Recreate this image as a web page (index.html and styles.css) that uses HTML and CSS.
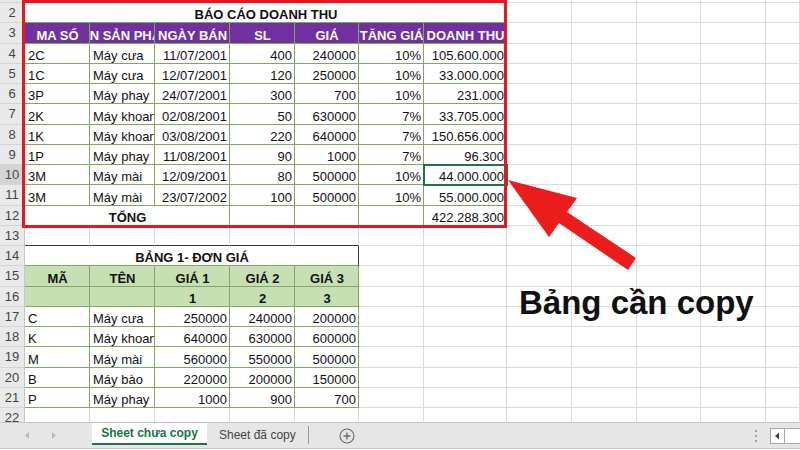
FILE: index.html
```html
<!DOCTYPE html>
<html lang="vi">
<head>
<meta charset="utf-8">
<title>Báo cáo doanh thu</title>
<link rel="stylesheet" href="styles.css">
</head>
<body>
<div class="sheet">
<table class="grid">
<colgroup>
<col class="w25"><col class="w65"><col class="w65"><col class="w75"><col class="w65"><col class="w64"><col class="w65"><col class="w83"><col class="w65"><col class="w65"><col class="w64"><col class="w65"><col class="w34">
</colgroup>
<tr class="r1"><th class="rh"></th><td></td><td></td><td></td><td></td><td></td><td></td><td></td><td></td><td></td><td></td><td></td><td></td></tr>
<tr><th class="rh">2</th><td colspan="7" class="g t">BÁO CÁO DOANH THU</td><td></td><td></td><td></td><td></td><td></td></tr>
<tr><th class="rh">3</th><td class="g hd">MA SỐ</td><td class="g hd"><div class="cc">TÊN SẢN PHẨM</div></td><td class="g hd">NGÀY BÁN</td><td class="g hd">SL</td><td class="g hd">GIÁ</td><td class="g hd"><div class="cc">TĂNG GIÁ</div></td><td class="g hd"><div class="cc">DOANH THU</div></td><td></td><td></td><td></td><td></td><td></td></tr>
<tr><th class="rh">4</th><td class="g">2C</td><td class="g">Máy cưa</td><td class="g n">11/07/2001</td><td class="g n">400</td><td class="g n">240000</td><td class="g n">10%</td><td class="g n">105.600.000</td><td></td><td></td><td></td><td></td><td></td></tr>
<tr><th class="rh">5</th><td class="g">1C</td><td class="g">Máy cưa</td><td class="g n">12/07/2001</td><td class="g n">120</td><td class="g n">250000</td><td class="g n">10%</td><td class="g n">33.000.000</td><td></td><td></td><td></td><td></td><td></td></tr>
<tr><th class="rh">6</th><td class="g">3P</td><td class="g">Máy phay</td><td class="g n">24/07/2001</td><td class="g n">300</td><td class="g n">700</td><td class="g n">10%</td><td class="g n">231.000</td><td></td><td></td><td></td><td></td><td></td></tr>
<tr><th class="rh">7</th><td class="g">2K</td><td class="g">Máy khoan</td><td class="g n">02/08/2001</td><td class="g n">50</td><td class="g n">630000</td><td class="g n">7%</td><td class="g n">33.705.000</td><td></td><td></td><td></td><td></td><td></td></tr>
<tr><th class="rh">8</th><td class="g">1K</td><td class="g">Máy khoan</td><td class="g n">03/08/2001</td><td class="g n">220</td><td class="g n">640000</td><td class="g n">7%</td><td class="g n">150.656.000</td><td></td><td></td><td></td><td></td><td></td></tr>
<tr><th class="rh">9</th><td class="g">1P</td><td class="g">Máy phay</td><td class="g n">11/08/2001</td><td class="g n">90</td><td class="g n">1000</td><td class="g n">7%</td><td class="g n">96.300</td><td></td><td></td><td></td><td></td><td></td></tr>
<tr><th class="rh sel">10</th><td class="g">3M</td><td class="g">Máy mài</td><td class="g n">12/09/2001</td><td class="g n">80</td><td class="g n">500000</td><td class="g n">10%</td><td class="g n active">44.000.000</td><td></td><td></td><td></td><td></td><td></td></tr>
<tr><th class="rh">11</th><td class="g">3M</td><td class="g">Máy mài</td><td class="g n">23/07/2002</td><td class="g n">100</td><td class="g n">500000</td><td class="g n">10%</td><td class="g n">55.000.000</td><td></td><td></td><td></td><td></td><td></td></tr>
<tr><th class="rh">12</th><td colspan="3" class="g t">TỔNG</td><td class="g"></td><td class="g"></td><td class="g"></td><td class="g n">422.288.300</td><td></td><td></td><td></td><td></td><td></td></tr>
<tr><th class="rh">13</th><td class="tk"></td><td class="tk"></td><td class="tk"></td><td class="tk"></td><td class="tk"></td><td></td><td></td><td></td><td></td><td></td><td></td><td></td></tr>
<tr><th class="rh">14</th><td colspan="5" class="g t dr">BẢNG 1- ĐƠN GIÁ</td><td></td><td></td><td></td><td></td><td></td><td></td><td></td></tr>
<tr><th class="rh">15</th><td class="g lg">MÃ</td><td class="g lg">TÊN</td><td class="g lg">GIÁ 1</td><td class="g lg">GIÁ 2</td><td class="g lg">GIÁ 3</td><td></td><td></td><td></td><td></td><td></td><td></td><td></td></tr>
<tr><th class="rh">16</th><td class="g lg"></td><td class="g lg"></td><td class="g lg">1</td><td class="g lg">2</td><td class="g lg">3</td><td></td><td></td><td></td><td></td><td></td><td></td><td></td></tr>
<tr><th class="rh">17</th><td class="g">C</td><td class="g">Máy cưa</td><td class="g n">250000</td><td class="g n">240000</td><td class="g n">200000</td><td></td><td></td><td></td><td></td><td></td><td></td><td></td></tr>
<tr><th class="rh">18</th><td class="g">K</td><td class="g">Máy khoan</td><td class="g n">640000</td><td class="g n">630000</td><td class="g n">600000</td><td></td><td></td><td></td><td></td><td></td><td></td><td></td></tr>
<tr><th class="rh">19</th><td class="g">M</td><td class="g">Máy mài</td><td class="g n">560000</td><td class="g n">550000</td><td class="g n">500000</td><td></td><td></td><td></td><td></td><td></td><td></td><td></td></tr>
<tr><th class="rh">20</th><td class="g">B</td><td class="g">Máy bào</td><td class="g n">220000</td><td class="g n">200000</td><td class="g n">150000</td><td></td><td></td><td></td><td></td><td></td><td></td><td></td></tr>
<tr><th class="rh">21</th><td class="g">P</td><td class="g">Máy phay</td><td class="g n">1000</td><td class="g n">900</td><td class="g n">700</td><td></td><td></td><td></td><td></td><td></td><td></td><td></td></tr>
<tr><th class="rh">22</th><td></td><td></td><td></td><td></td><td></td><td></td><td></td><td></td><td></td><td></td><td></td><td></td></tr>
</table>
<div class="highlight"></div>
</div>

<div class="tabbar">
  <div class="nav">
    <svg width="92" height="25" viewBox="0 0 92 25"><polygon points="29,9 25,12.5 29,16" fill="#b8b8b8"/><polygon points="52,9 56,12.5 52,16" fill="#b8b8b8"/></svg>
  </div>
  <div class="tab current">Sheet chưa copy</div>
  <div class="tab">Sheet đã copy</div>
  <div class="sep"></div>
  <div class="add">
    <svg width="20" height="20" viewBox="0 0 20 20"><circle cx="10" cy="10" r="7" fill="none" stroke="#6a6a6a" stroke-width="1.1"/><path d="M10 6.5V13.5M6.5 10H13.5" stroke="#6a6a6a" stroke-width="1.3"/></svg>
  </div>
  <div class="spacer"></div>
  <div class="dots">
    <svg width="4" height="14" viewBox="0 0 4 14"><circle cx="2" cy="2" r="1" fill="#8a8a8a"/><circle cx="2" cy="7" r="1" fill="#8a8a8a"/><circle cx="2" cy="12" r="1" fill="#8a8a8a"/></svg>
  </div>
  <div class="hscroll">
    <div class="sbtn"><svg width="13" height="14" viewBox="0 0 13 14"><polygon points="8,3.5 4,7 8,10.5" fill="#444"/></svg></div>
  </div>
</div>

<svg class="arrow" width="800" height="450" viewBox="0 0 800 450">
  <polygon points="508,180 577,198 567,212 636,258 628,270 559,223 549,237" fill="#ec1c1c"/>
</svg>
<div class="caption">Bảng cần copy</div>
</body>
</html>
```
FILE: styles.css
```css
* { box-sizing: border-box; }
html, body { margin: 0; padding: 0; background: #fff; }
body {
  width: 800px;
  height: 450px;
  overflow: hidden;
  position: relative;
  font-family: "Liberation Sans", Arial, sans-serif;
}

.sheet {
  position: relative;
  height: 422px;
  overflow: hidden;
}

.grid {
  border-collapse: separate;
  border-spacing: 0;
  table-layout: fixed;
  width: 800px;
}
.w25 { width: 25px; }
.w34 { width: 34px; }
.w64 { width: 64px; }
.w65 { width: 65px; }
.w75 { width: 75px; }
.w83 { width: 83px; }

.grid tr { height: 20.25px; }
.grid tr.r1 { height: 3px; }

.grid td {
  padding: 0 2px 0 3px;
  border-right: 1px solid #dadada;
  border-bottom: 1px solid #dadada;
  font-size: 13px;
  line-height: 15px;
  white-space: nowrap;
  overflow: hidden;
  vertical-align: bottom;
  color: #111;
  text-align: left;
}

.grid th.rh {
  padding: 0;
  background: #e9e9e9;
  color: #444;
  font-size: 13px;
  font-weight: normal;
  text-align: center;
  vertical-align: middle;
  border-right: 1px solid #c6c6c6;
  border-bottom: 1px solid #d4d4d4;
}
.grid th.rh.sel { background: #d4d4d4; color: #4a4a4a; }

.grid td.g { border-right-color: #80a862; border-bottom-color: #80a862; }
.grid td.t { font-weight: bold; text-align: center; }
.grid td.n { text-align: right; }
.grid td.hd {
  background: #7030a0;
  color: #fff;
  font-weight: bold;
  text-align: center;
}
.grid td.lg {
  background: #c6e0b4;
  font-weight: bold;
  text-align: center;
}
.grid td.tk { border-bottom-color: #3a3a3a; }
.grid td.dr { border-right-color: #3a3a3a; }
.grid td.active { outline: 2px solid #217346; outline-offset: -1px; }

.cc {
  display: flex;
  justify-content: center;
}

.highlight {
  position: absolute;
  left: 22px;
  top: 0;
  width: 485px;
  height: 228px;
  border: 3px solid #e8161e;
}

.tabbar {
  display: flex;
  align-items: stretch;
  height: 27px;
  background: #e6e6e6;
  border-top: 1px solid #c6c6c6;
  border-bottom: 1px solid #c6c6c6;
  font-size: 12px;
}
.nav { width: 92px; }
.nav svg { display: block; }
.tab {
  display: flex;
  align-items: center;
  padding: 0 12px 2px;
  color: #444;
  white-space: nowrap;
}
.tab.current {
  width: 115px;
  justify-content: center;
  padding: 0;
  margin-bottom: 3px;
  background: #fff;
  color: #217346;
  font-weight: bold;
  border-bottom: 2px solid #217346;
}
.sep {
  width: 1px;
  margin: 3px 0 4px;
  background: #9a9a9a;
}
.add {
  display: flex;
  align-items: center;
  margin-left: 28px;
}
.add svg { display: block; }
.spacer { flex: 1; }
.dots {
  display: flex;
  align-items: center;
  margin-right: 12px;
}
.dots svg { display: block; }
.hscroll {
  width: 30px;
  margin: 5px 0 4px;
  background: #fff;
  border: 1px solid #a8a8a8;
  border-right: 0;
}
.sbtn {
  width: 14px;
  height: 100%;
  border-right: 1px solid #a8a8a8;
}
.sbtn svg { display: block; }

.arrow {
  position: absolute;
  left: 0;
  top: 0;
  pointer-events: none;
}

.caption {
  position: absolute;
  left: 519px;
  top: 286px;
  font-size: 33px;
  line-height: 1;
  font-weight: bold;
  color: #111;
  white-space: nowrap;
}
```
